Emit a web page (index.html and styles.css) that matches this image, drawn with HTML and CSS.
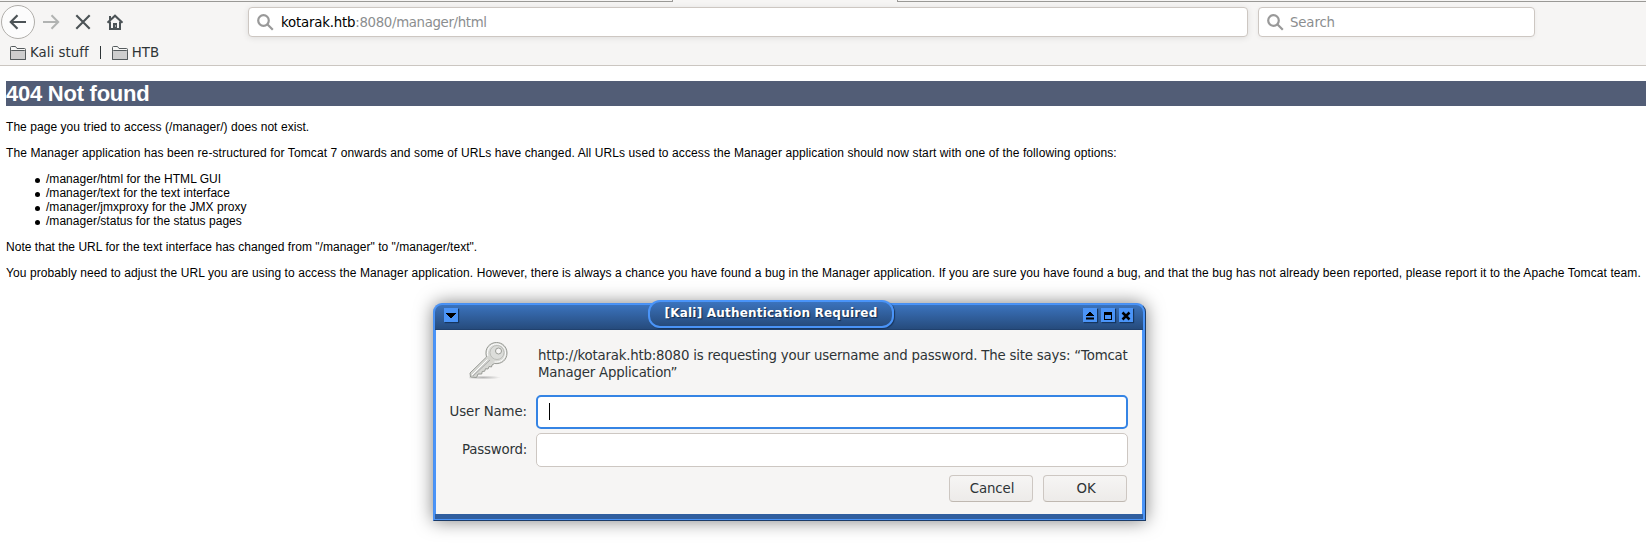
FILE: index.html
```html
<!DOCTYPE html>
<html lang="en">
<head>
<meta charset="utf-8">
<title>404 Not found</title>
<link rel="stylesheet" href="styles.css">
</head>
<body>
<header class="chrome">
  <div class="tabstrip"><span class="tab-left"></span><span class="tab-right"></span></div>
  <nav class="toolbar">
    <span class="nav-buttons">
      <svg width="128" height="38" viewBox="0 0 128 38" fill="none" stroke="#4c5356" stroke-width="2">
        <circle cx="18" cy="20" r="16.5" fill="#fcfcfc" stroke="#b0aeaa" stroke-width="1"/>
        <path d="M11 20H26M17.5 13.3 10.8 20l6.7 6.7" stroke-width="2.2"/>
        <path d="M43 20H58M51.5 13.3 58.2 20l-6.7 6.7" stroke="#b1b3b2"/>
        <path d="M76.3 13.3 89.7 26.7M89.7 13.3 76.3 26.7" stroke-width="2.1"/>
        <path d="M107.500 20.700 115 13.700l7.500 7" stroke-width="2"/>
        <path d="M110 19.500V27h10V19.500" stroke-width="2"/>
        <path d="M110 14v4" stroke-width="2"/>
        <path fill-rule="evenodd" d="M113 27v-6h4v6zM115 23.500v1h1v-1z" fill="#4c5356" stroke="none"/>
      </svg>
    </span>
    <div class="field url"><svg class="lens" width="17" height="17" viewBox="0 0 17 17"><circle cx="6.500" cy="6.500" r="5.300"/><path d="m10.300 10.300 5.500 5.500"/></svg><span class="address"><b>kotarak.htb</b>:8080/manager/html</span></div>
    <div class="field search"><svg class="lens" width="17" height="17" viewBox="0 0 17 17"><circle cx="6.500" cy="6.500" r="5.300"/><path d="m10.300 10.300 5.500 5.500"/></svg><span class="hint">Search</span></div>
  </nav>
  <div class="bookmarks">
    <svg class="folder" width="16" height="14" viewBox="0 0 16 14"><path d="M.5 13.500V1.500q0-1 1-1H5.500l1.500 2h7.500q1 0 1 1v10z" fill="#f7f7f6"/><path d="M.5 13.500V5.500q0-1 1-1h13q1 0 1 1v8z" fill="#cecece"/></svg>
    <span class="bm-kali">Kali stuff</span><span class="divider"></span>
    <svg class="folder" width="16" height="14" viewBox="0 0 16 14"><path d="M.5 13.500V1.500q0-1 1-1H5.500l1.500 2h7.500q1 0 1 1v10z" fill="#f7f7f6"/><path d="M.5 13.500V5.500q0-1 1-1h13q1 0 1 1v8z" fill="#cecece"/></svg>
    <span>HTB</span>
  </div>
</header>
<main class="page">
  <h1>404 Not found</h1>
  <p class="lead">The page you tried to access (/manager/) does not exist.</p>
  <p class="intro">The Manager application has been re-structured for Tomcat 7 onwards and some of URLs have changed. All URLs used to access the Manager application should now start with one of the following options:</p>
  <ul>
    <li>/manager/html for the HTML GUI</li>
    <li>/manager/text for the text interface</li>
    <li>/manager/jmxproxy for the JMX proxy</li>
    <li>/manager/status for the status pages</li>
  </ul>
  <p class="note">Note that the URL for the text interface has changed from "/manager" to "/manager/text".</p>
  <p class="advice">You probably need to adjust the URL you are using to access the Manager application. However, there is always a chance you have found a bug in the Manager application. If you are sure you have found a bug, and that the bug has not already been reported, please report it to the Apache Tomcat team.</p>
</main>
<section class="dialog">
  <div class="titlebar">
    <span class="winbtn"><svg width="14" height="14"><path d="M2 5h10v1H11v1H10v1H9v1H8v1H6V9H5V8H4V7H3V6H2z"/></svg></span>
    <span class="win-group">
      <span class="winbtn"><svg width="14" height="14"><path d="M3 8V7h1V6h1V5h1V4h2v1h1v1h1v1h1v1zM3 9.500h8v2H3z"/></svg></span>
      <span class="winbtn"><svg width="14" height="14"><path fill-rule="evenodd" d="M3 4h8v8H3zM4 7v4h6V7z"/></svg></span>
      <span class="winbtn"><svg width="14" height="14"><path d="m3.500 4.500 7 7m0-7-7 7" stroke="#000" stroke-width="2.500"/></svg></span>
    </span>
  </div>
  <div class="caption"><span>[Kali] Authentication Required</span></div>
  <div class="content">
    <div class="message">
      <svg class="key" width="40" height="39" viewBox="0 0 40 39">
        <defs><linearGradient id="metal" x1="0" y1="0" x2="1" y2="1"><stop offset="0" stop-color="#f2f2f0"/><stop offset=".5" stop-color="#d3d4d0"/><stop offset="1" stop-color="#e9e9e6"/></linearGradient>
        <radialGradient id="shade"><stop offset="0" stop-color="#888" stop-opacity=".6"/><stop offset="1" stop-color="#888" stop-opacity="0"/></radialGradient></defs>
        <ellipse cx="14" cy="36.500" rx="18" ry="2" fill="url(#shade)"/>
        <path d="M17.500 16C15 7 21 1.500 27.500 1.500c6 0 10.500 4.500 10.500 10.500 0 7-5.500 11.500-12.500 10.500L23 24l-.5 2-2.500-.5-1 2.500-2.500-.3-.8 2.500-2.500.3-.5 2.500L9 33l-1.500 3.500-6-.5L1 32z" fill="url(#metal)" stroke="#989a95"/>
        <path d="M3 34 18.500 18.500M18.800 15C17 8 22 3 27.500 3c5 0 9 4 9 9 0 6-5 9.500-11 9" fill="none" stroke="#fff"/>
        <path d="m4 35 17-16" stroke="#aaa" fill="none"/>
        <circle cx="28" cy="11.500" r="7" fill="#dcddda" stroke="#bcbdb9"/>
        <circle cx="29.500" cy="10" r="3" fill="#f6f5f4" stroke="#999b96"/>
      </svg>
      <p class="prompt">http://kotarak.htb:8080 is requesting your username and password. The site says: “Tomcat<br>Manager Application”</p>
    </div>
    <div class="row"><label class="lab-user">User Name:</label><div class="input focused"><span class="caret"></span></div></div>
    <div class="row pass"><label class="lab-pass">Password:</label><div class="input"></div></div>
    <div class="actions"><div class="button">Cancel</div><div class="button">OK</div></div>
  </div>
  <div class="bottom-edge"></div>
</section>
</body>
</html>
```
FILE: styles.css
```css
* { box-sizing: border-box; }
body { margin: 0; height: 559px; overflow: hidden; position: relative; background: #fff; font: 12px/14px "Liberation Sans", Arial, sans-serif; color: #000; }
svg { display: block; flex: none; }

.chrome { height: 66px; background: #f6f5f4; border-bottom: 1px solid #cbc6c1; font: 13.33px/16px "DejaVu Sans", sans-serif; color: #2e3436; }
.tabstrip { height: 2px; display: flex; justify-content: space-between; }
.tab-left { width: 673px; border-bottom: 1px solid #9a9996; border-right: 1px solid #9a9996; }
.tab-right { width: 749px; border-bottom: 1px solid #9a9996; border-left: 1px solid #9a9996; }
.toolbar { height: 40px; display: flex; align-items: flex-start; }
.nav-buttons { width: 248px; }
.field { height: 30px; margin-top: 5px; border: 1px solid #cdc7c2; border-radius: 4px; background: #fff; display: flex; align-items: center; padding-left: 8px; white-space: nowrap; color: #8b8e8f; }
.url { width: 1000px; box-shadow: 0 1px 6px rgba(0,0,0,.10); }
.search { width: 277px; margin-left: 10px; box-shadow: 0 1px 4px rgba(0,0,0,.05); }
.lens { fill: none; stroke: #999; stroke-width: 2.2; margin-right: 7px; }
.address { letter-spacing: -.35px; padding-top: 1px; }
.address b { font-weight: 400; color: #000; letter-spacing: -.2px; }
.hint { letter-spacing: -.15px; padding-top: 1px; margin-left: -1px; }
.bookmarks { height: 23px; padding: 4px 0 0 10px; display: flex; align-items: flex-start; white-space: nowrap; line-height: 14px; }
.folder { stroke: #555b5d; stroke-width: 1; margin: 0 4px 0 0; }
.bm-kali { letter-spacing: .05px; }
.divider { width: 1px; height: 13px; margin: 0 11px; background: #2e3436; }

.page { padding: 15px 0 0 6px; white-space: nowrap; }
.page h1 { margin: 0 0 14px; height: 25px; font-size: 22px; line-height: 25px; color: #fff; background: #525d76; letter-spacing: -.25px; }
.page p { margin: 0 0 12px; }
.page .lead { letter-spacing: .055px; }
.page .intro { letter-spacing: .103px; }
.page .note { letter-spacing: .027px; }
.page .advice { letter-spacing: .093px; }
.page ul { margin: 0 0 12px; padding: 0 0 0 29px; list-style: none; letter-spacing: .03px; }
.page li { display: flex; align-items: center; gap: 6px; }
.page li::before { content: ""; width: 5px; height: 5px; margin-top: 2px; border-radius: 50%; background: #000; }

.dialog { position: absolute; left: 433px; top: 303px; width: 713px; height: 218px; border: 1px solid #4a90f0; border-bottom-color: #1c3c68; border-right-color: #1c3c68; border-radius: 9px 9px 0 0; background: #4a94f8; box-shadow: 0 0 18px rgba(0,0,0,.5); font: 13.33px/17px "DejaVu Sans", sans-serif; color: #2e3436; display: flex; flex-direction: column; }
.titlebar { height: 25px; margin: 1px 2px 0 1px; padding: 3px 10px 0 9px; border-radius: 7px 7px 0 0; background: linear-gradient(#3b73bd, #264b7c); border-bottom: 1px solid #20416e; display: flex; justify-content: space-between; align-items: flex-start; flex: none; }
.winbtn { width: 14px; height: 14px; background: #4a94f8; box-shadow: 1px 1px 1px #16365f; }
.win-group { display: flex; gap: 4px; }
.caption { position: absolute; left: 214px; top: -4px; width: 246px; height: 28px; border: 2px solid #4a94f8; border-radius: 12px; background: linear-gradient(#3b73bd, #264b7c); box-shadow: 1px 1px 1px #18365e; color: #fff; font-weight: 700; font-size: 12px; line-height: 23px; letter-spacing: .21px; text-align: center; white-space: nowrap; text-shadow: 1px 1px 1px #10294a; }
.content { height: 184px; margin: 0 3px 0 2px; padding: 0 14px 0 13px; background: #f6f5f4; flex: none; }
.message { height: 65px; display: flex; white-space: nowrap; }
.key { margin: 11px 0 0 20px; }
.prompt { margin: 17px 0 0 29px; letter-spacing: -.2px; }
.row { display: flex; align-items: center; height: 34px; gap: 9px; }
.row label { width: 78px; padding-bottom: 2px; text-align: right; white-space: nowrap; flex: none; }
.lab-user { letter-spacing: -.1px; }
.lab-pass { letter-spacing: -.2px; }
.pass { margin-top: 4px; }
.input { width: 592px; height: 34px; border: 1px solid #cdc7c2; border-radius: 5px; background: #fff; flex: none; padding: 7px 0 0 11px; }
.focused { border: 2px solid #3584e4; padding: 6px 0 0 11px; }
.caret { display: block; width: 1px; height: 17px; background: #000; }
.actions { display: flex; justify-content: flex-end; gap: 10px; margin: 8px 1px 0 0; }
.button { width: 84px; height: 27px; padding-left: 2px; border: 1px solid #cdc7c2; border-bottom-color: #bfb8b1; border-radius: 4px; background: linear-gradient(#f6f5f4, #edebe9); text-align: center; line-height: 25px; letter-spacing: -.1px; }
.bottom-edge { height: 5px; margin: 0 2px 0 1px; background: #315f9f; }
```
